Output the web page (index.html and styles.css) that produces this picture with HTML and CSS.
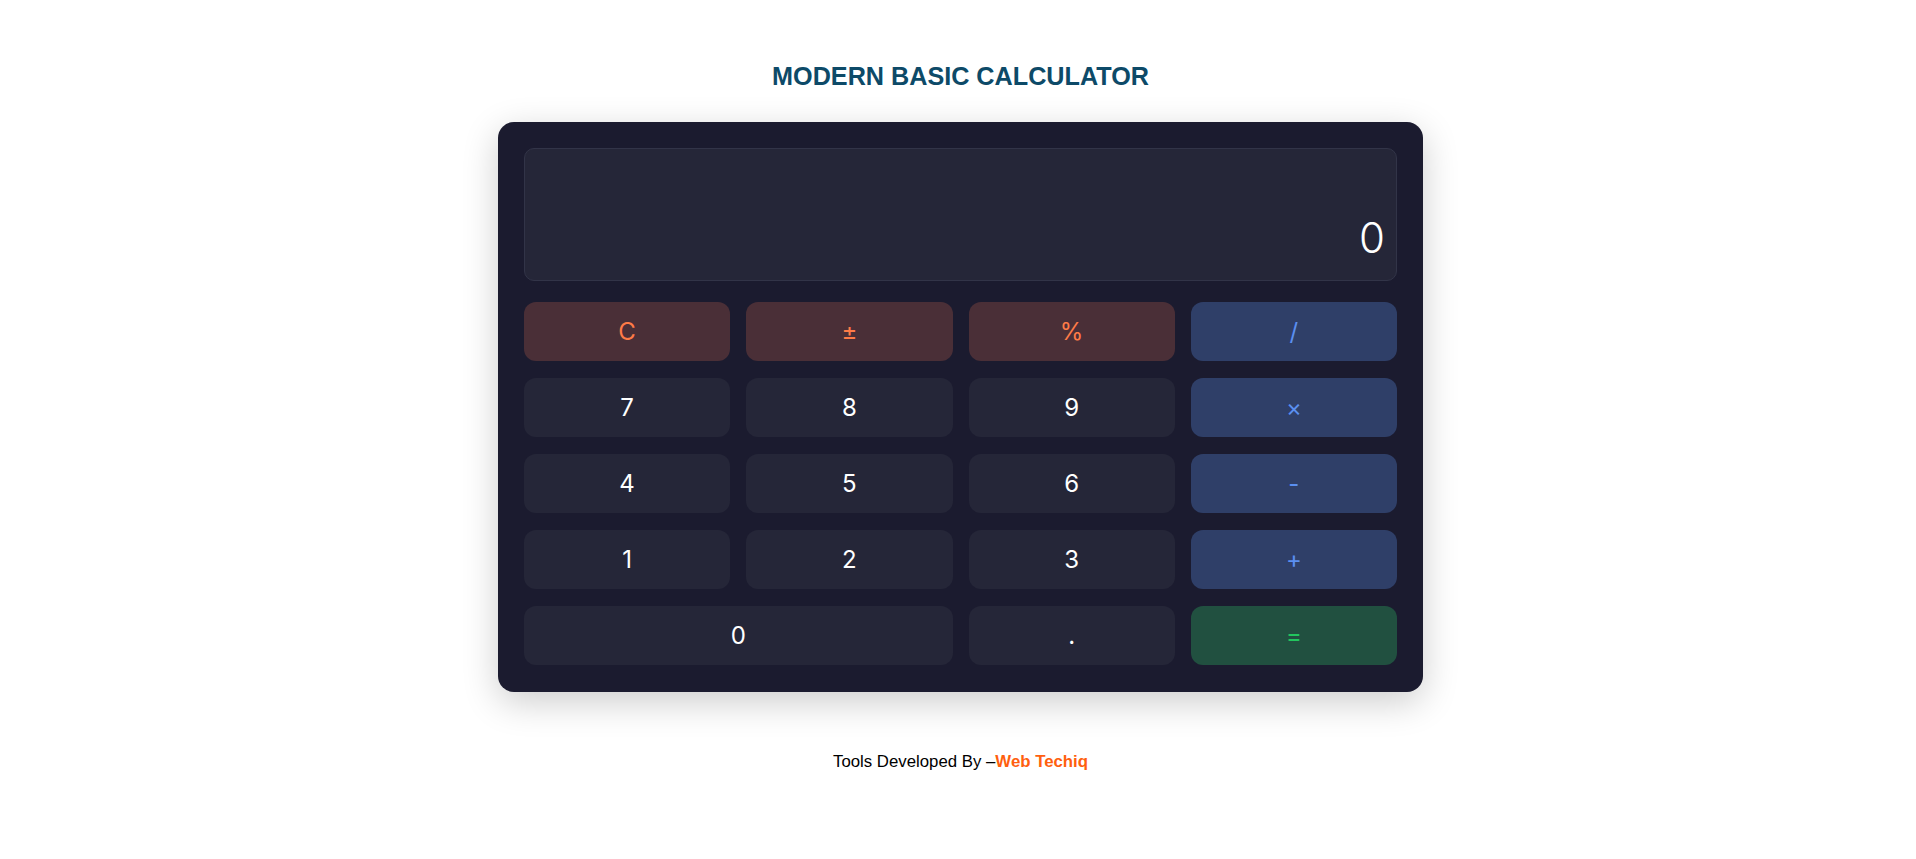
FILE: index.html
```html
<!DOCTYPE html>
<html lang="en">
<head>
<meta charset="utf-8">
<title>Modern Basic Calculator</title>
<link rel="stylesheet" href="styles.css">
</head>
<body>
<main class="page">
  <h1 class="title">MODERN BASIC CALCULATOR</h1>
  <section class="calc">
    <div class="display"><span class="value">0</span></div>
    <div class="keys">
      <button class="key fn">C</button>
      <button class="key fn">±</button>
      <button class="key fn">%</button>
      <button class="key op">/</button>
      <button class="key">7</button>
      <button class="key">8</button>
      <button class="key">9</button>
      <button class="key op">×</button>
      <button class="key">4</button>
      <button class="key">5</button>
      <button class="key">6</button>
      <button class="key op">-</button>
      <button class="key">1</button>
      <button class="key">2</button>
      <button class="key">3</button>
      <button class="key op">+</button>
      <button class="key wide">0</button>
      <button class="key">.</button>
      <button class="key eq">=</button>
    </div>
  </section>
  <p class="footer">Tools Developed By –<a class="brand" href="#">Web Techiq</a></p>
</main>
</body>
</html>
```
FILE: styles.css
```css
* { box-sizing: border-box; }
html, body { margin: 0; background: #ffffff; }
body {
  font-family: "Liberation Sans", Arial, sans-serif;
  padding-left: 5px;
}
.page {
  display: flex;
  flex-direction: column;
  align-items: center;
  padding-top: 62px;
}
.title {
  margin: 0 0 31px;
  font-size: 25.2px;
  font-weight: 700;
  color: #0d4a68;
  letter-spacing: 0;
}
.calc {
  width: 925px;
  padding: 26px 26px 27px;
  background: #1b1b2f;
  border-radius: 16px;
  box-shadow: 0 10px 36px rgba(0, 0, 0, 0.2);
  font-family: Inter, "Noto Sans", sans-serif;
}
.display {
  height: 133px;
  background: #252638;
  border: 1px solid #323448;
  border-radius: 10px;
  display: flex;
  align-items: flex-end;
  justify-content: flex-end;
  padding: 20px 11px 17px;
}
.value {
  font-size: 42px;
  font-weight: 300;
  color: #ffffff;
  line-height: normal;
}
.keys {
  margin-top: 21px;
  display: grid;
  grid-template-columns: repeat(4, 1fr);
  column-gap: 16px;
  row-gap: 17px;
}
.key {
  height: 59px;
  border: 0;
  border-radius: 12px;
  background: #252638;
  color: #ffffff;
  font-family: Inter, "Noto Sans", sans-serif;
  font-size: 24px;
  font-weight: 400;
  padding: 0;
  cursor: pointer;
}
.key.fn { background: #4a2f37; color: #ff7b47; }
.key.op { background: #2f3f68; color: #5b8ff0; }
.key.eq { background: #215040; color: #22c55e; }
.key.wide { grid-column: span 2; }
.footer {
  margin: 60px 0 0;
  font-size: 16.8px;
  color: #000000;
}
.brand {
  color: #ff5f0f;
  font-weight: 700;
  text-decoration: none;
}
```
